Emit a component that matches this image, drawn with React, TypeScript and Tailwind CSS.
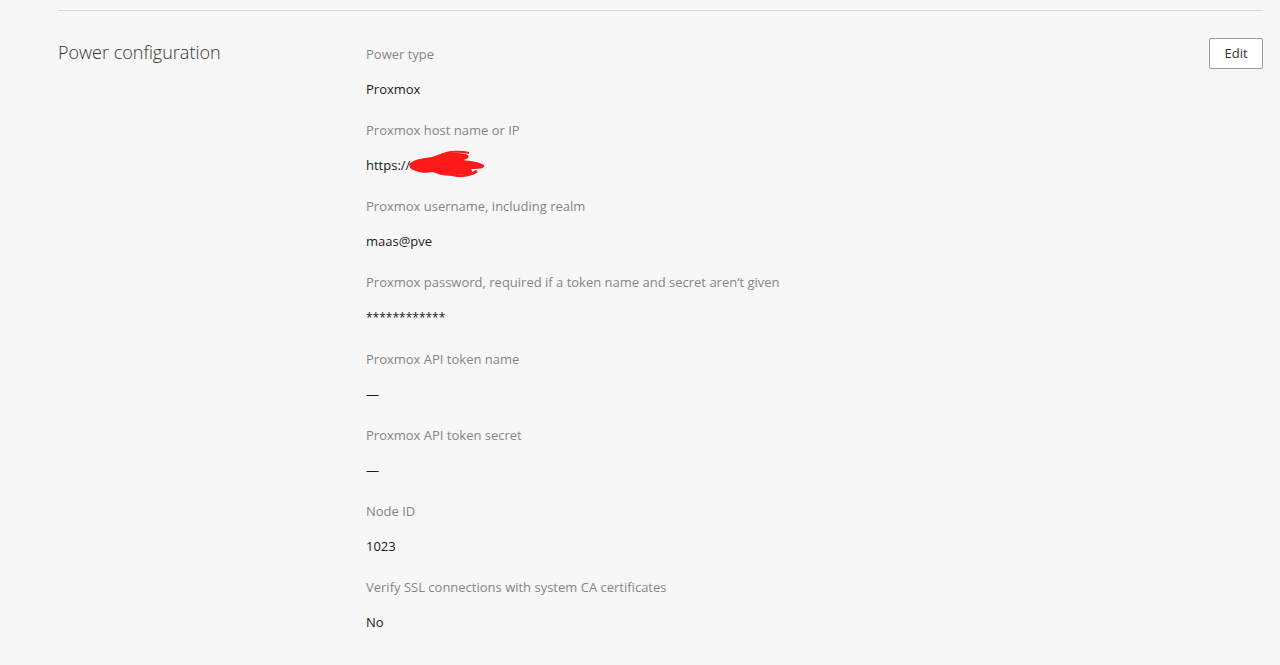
import React from "react";

const items: { label: string; value: React.ReactNode }[] = [
  { label: "Power type", value: "Proxmox" },
  {
    label: "Proxmox host name or IP",
    value: (
      <span className="inline-flex h-[24px] items-center">
        https://
        <svg width="80" height="26" viewBox="0 0 80 26" className="-ml-[3px] -mt-[1px] overflow-visible">
          <path
            d="M2 12 C10 5 20 7 28 4 C36 0 48 0 58 2 C64 3 62 7 56 8 C64 9 72 10 77 13 C79 17 70 17 64 17 C68 21 60 24 52 22 C44 25 34 24 26 20 C18 22 8 20 3 16 Z"
            fill="#ff1a1a"
          />
          <path d="M34 3 C42 -1 54 -1 62 1" stroke="#ff1a1a" strokeWidth="2" fill="none" />
          <path d="M40 20 C50 26 62 24 70 19" stroke="#ff1a1a" strokeWidth="3" fill="none" />
        </svg>
      </span>
    ),
  },
  { label: "Proxmox username, including realm", value: "maas@pve" },
  {
    label: "Proxmox password, required if a token name and secret aren\u2019t given",
    value: <span className="text-[12px]">************</span>,
  },
  { label: "Proxmox API token name", value: "\u2014" },
  { label: "Proxmox API token secret", value: "\u2014" },
  { label: "Node ID", value: "1023" },
  { label: "Verify SSL connections with system CA certificates", value: "No" },
];

export default function App() {
  return (
    <div
      className="min-h-[665px] w-full bg-[#f7f7f7] pt-[10px]"
      style={{ fontFamily: "'Open Sans', 'Noto Sans', sans-serif" }}
    >
      <div className="mx-[58px] mr-[17px] border-t border-[#d9d9d9]" />
      <div className="mx-[58px] mr-[17px] flex pt-[27px]">
        <div className="w-[308px] shrink-0 pt-[2px]">
          <h2 className="text-[18px] font-light leading-[24px] text-[#333]">Power configuration</h2>
        </div>
        <div className="flex-1 pt-[4px]">
          {items.map((it, i) => (
            <div key={i} className="mb-[17.14px]">
              <div className="mb-[11px] text-[13px] leading-[24px] text-[#858585]">{it.label}</div>
              <div className="h-[24px] text-[13px] leading-[24px] text-[#1a1a1a]">{it.value}</div>
            </div>
          ))}
        </div>
        <div className="shrink-0">
          <button className="h-[31px] w-[54px] rounded-[2px] border border-[#9a9a9a] bg-white text-[13px] text-[#333]">
            Edit
          </button>
        </div>
      </div>
    </div>
  );
}
